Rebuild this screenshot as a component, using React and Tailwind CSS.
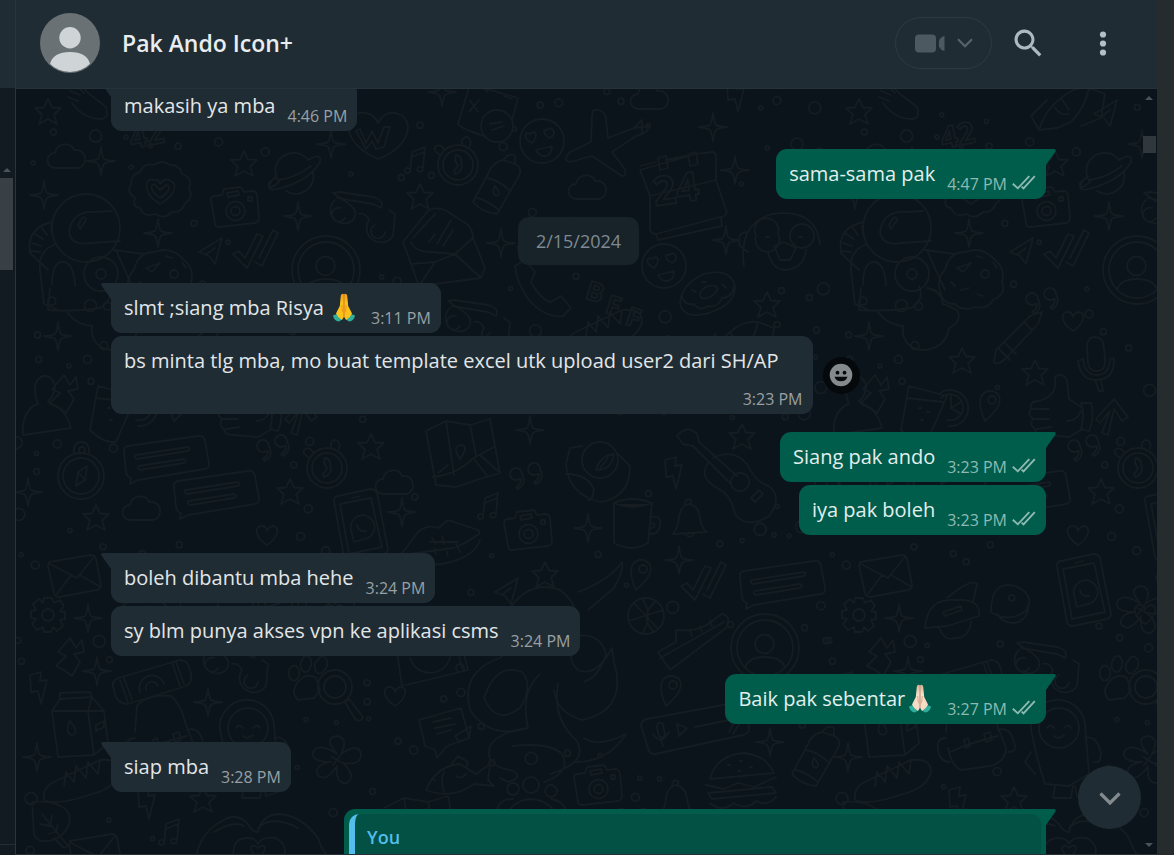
import React from "react";

const star = "M0-13L4-4.500L13-4L6 2.500L9 12L0 7L-9 12L-6 2.500L-13-4L-4-4.500Z";
const sparkle = "M0-14Q1.500-3 3-2Q5-.5 14 0Q4 1.500 3 3Q1.500 4.500 0 14Q-1.500 4.500-3 3Q-4 1.500-14 0Q-5-.5-3-2Q-1.500-3 0-14Z";
const heart = "M0 10C-15 0-11-10-5-9Q-1-9 0-4Q2-9 6-9C13-8 12 2 0 10Z";
const cloud = "M-12 11C-23 9-21-4-12-4C-10-15 5-15 7-7C20-9 22 9 11 11Z";
const check = "M-22 2L-16-1L-10 6L2-18L8-16L-8 16ZM4 6L18-22L23-19L7 14L0 10";
const bubbleNote = "M-42-6Q-43-11-38-12L32-22Q38-23 39-17L43 5Q44 10 39 11L-28 22L-36 26L-35 20Q-39 19-40 14ZM-30-3L22-11Q25-9 22-7L-29 1Q-33-1-30-3ZM-27 8L18 1Q22 3 18 5L-26 12Q-30 10-27 8Z";
const face = "M-22 0A22 22 0 1 0 22 0A22 22 0 1 0-22 0M-10 2C-20-3-17-10-12-7Q-7-11-6-6Q-6-2-10 2ZM8-3C1-6 0-13 5-11Q10-15 12-9Q12-5 8-3ZM-6 9L10 5Q10 14 3 15Q-4 15-6 9Z";
const clock = "M-20 0A20 20 0 1 0 20 0A20 20 0 1 0-20 0M-15 0A15 15 0 1 0 15 0A15 15 0 1 0-15 0M-2-10Q3-9 3-5L4 2Q2 8-3 9L-4 6L0 1L-3-5ZM-18-10Q-26-15-22-19Q-17-21-14-16M4-21Q3-28 9-28Q14-26 12-19";
const camera = "M-24-9Q-24-13-20-13L-13-14L-11-20L6-22L9-17L17-18Q21-18 22-14L24 9Q24 13 20 14L-16 18Q-20 18-20 14ZM-9 2A9.500 9.500 0 1 0 10 2A9.500 9.500 0 1 0-9 2M-4 2A4.500 4.500 0 1 0 5 2A4.500 4.500 0 1 0-4 2M-8-16L3-18L4-14L-7-12ZM13-12h4v4h-4Z";
const avatar = "M-34 0A34 34 0 1 0 34 0A34 34 0 1 0-34 0M-28 0A28 28 0 1 0 28 0A28 28 0 1 0-28 0M-10-4A9.500 9.500 0 1 0 9-4A9.500 9.500 0 1 0-10-4M-20 20Q-17 9 0 9Q17 9 20 20";
const notes = "M-7 9Q-12 6-12 11Q-11 15-7 12L-5-8L8-13L6 8Q1 5 0 9Q1 14 6 10M-5-3L7-8";
const bolt = "M-8-13L3-16L2-7L9-8L3 16L0 3L-7 4Z";
const quotes = "M-5-6A6 6 0 1 0-11 0L-6-1Q-6 5-11 7L-9 9Q0 4-5-6ZM13-11A6 6 0 1 0 7-5L12-6Q12 0 7 2L9 4Q18-1 13-11Z";
const pin = "M-6 16Q-14-2-9-10Q-2-18 7-11Q14-1-6 16ZM-3-5A4 4 0 1 0 5-5A4 4 0 1 0-3-5";
const glasses = "M-30-12A13 13 0 1 0-12 8Q-4-2-22-12L-32-19L-26-20L8-15Q20-12 16-4L8-8L-28-14M-6 2Q0 0 4 8M4 8A13 13 0 1 0 28 24L30 2L24-2M-24-4A7 7 0 1 0-20 6M10 13A7 7 0 1 0 20 20";
const envelope = "M-26-13L16-20Q20-20 21-16L26 10Q26 14 22 15L-16 22Q-20 22-21 18L-27-9ZM-25-11L2 3L19-18M-18 19L-4 0M24 11L5 0";
const gear = "M-4-17L4-17L6-12L12-15L16-9L12-4L17-3L17 4L12 5L15 11L9 16L5 12L3 17L-4 17L-5 12L-11 15L-16 9L-12 4L-17 3L-17-4L-12-5L-15-11L-9-16L-5-12ZM-6 0A6 6 0 1 0 6 0A6 6 0 1 0-6 0";
const person = "M-10-20A10 12 0 1 1 10-20Q8-10 3-7L7-3Q21 1 26 20L-22 27Q-24 8-12-2L-7-4Q-10-10-10-20Z";
const phone = "M-26-24Q-27-28-22-29L10-36Q15-36 17-32L28 24Q28 28 24 29L-10 36Q-15 36-16 32ZM-20-21L11-27L22 22L-11 29ZM-9 5A12 12 0 1 1 5 14L-6 17ZM-3 0Q-2 7 6 6M-8-27L0-29";
const planet = "M-16 8A18 18 0 0 1 13-14M18-3A18 18 0 0 1-9 17M-16 8Q-28 18-26 9L-18 2M13-14Q27-22 25-12Q15 6-14 14Q-30 19-24 8M-16 6Q0 4 16-8";
const helmet = "M-34 0A34 34 0 1 0 34 0A34 34 0 1 0-34 0M-17 4Q-14-17 8-16L26-17M-17 4Q-15 18 4 15L34 13M-8-3L-4-10Q0-12 0-8L-6 1ZM-34-6Q-60 0-56 25L-38 42M-30 16Q-48 22-46 42L-42 76L-28 82M-35-2L-34 6M-44 0L-39 7M-51 6L-43 11M-54 15L-45 18M-55 23L-46 24M28 22L58 26M30 22Q36 36 48 62M-34 57Q-34 33-22 34Q-12 36-11 58M-2 46A17 17 0 1 0 32 46A17 17 0 1 0-2 46M10 46A5 5 0 1 0 20 46A5 5 0 1 0 10 46M-36 60L-38 82Q-10 84 14 80Q28 72 22 58M-20 82Q-12 96 6 98Q4 118 24 122Q48 122 52 100Q66 94 60 82Q48 76 46 76Q44 62 30 60";
const cookie = "M-30 14Q-36 0-26-10Q-22-28-6-28Q10-34 22-22Q35-12 31 2Q36 14 22 20Q16 30 4 27Q-8 32-16 24Q-28 24-30 14M-14-12L0-17L-8-8ZM6-24L12-22M22-18L26-12M10-6A4 4 0 1 0 18-6A4 4 0 1 0 10-6M-10 10L-2 8M6 14L12 16M-20 2L-16 6";
const badge = "M-25 8Q-34 2-29-6Q-29-16-20-18Q-16-28-6-25Q2-31 10-25Q20-25 22-16Q33-12 29-2Q34 8 25 13Q22 23 12 22Q4 30-5 24Q-16 28-20 18Q-28 17-25 8ZM0 14C-20 2-14-14-6-10Q-1-11 0-6Q4-12 9-10C20-6 14 6 0 14ZM0 8C-12 0-9-8-5-5L0 0L6-5C12-5 9 3 0 8Z";
const whaleHeart = "M0 24C-42 6-32-26-12-22Q-3-20 0-12Q6-24 18-22C40-16 30 14 0 24ZM-18-6L-12 8L-6-4L0 8L6-8L12-8L6 12L-2 14L-6 6L-12 14L-22-4Z";
const calendar = "M-34-22L-18-26M-8-28L12-32M22-34L38-36Q42-36 42-32L42-8L52 22Q54 26 50 28L-18 46Q-24 46-24 40L-24 8L-34-18ZM-24 8L42-8M-18 46L-16 52L48 38L47 30M-16-30L-8-32L-6-20L-14-18ZM14-34L22-36L24-24L16-22Z";
const plane = "M-2-36Q-8-38-8-30L-9-4L-30 6Q-38 14-30 16L-8 10L22 30Q28 30 24 22L12 6L36-10Q50-14 48-20L34-18L8-8L6-26Q6-34-2-36ZM34-18L42-26L42-14";
const bottle = "M10-32Q16-40 22-36L22-28Q30-24 26-16L4 22Q-12 20-20 10L-4-20Q0-30 10-32ZM-6-14Q6-12 16-2M-16 6Q-6 8 6 18M2-6Q-2 2 4 4Q9 2 2-6ZM10-32L22-28";
const openEnvelope = "M-42 4L-18-26Q-12-32 0-28L22-14Q28-8 28 0L40 30L36 40L-26 48ZM-32 0L-10-24M-34 4Q-30 14-14 14L10 16L28 0M-34 26L-10 24L10 16L36 40M-16 4L-10-4M-8 6L6-18M-2 8L8-8M-10 24L-26 48";
const compass = "M-23 0A23 23 0 1 0 23 0A23 23 0 1 0-23 0M-18 0A18 18 0 1 0 18 0A18 18 0 1 0-18 0M-5 10L-3-4L6-10L4 4ZM-3-4L4 4M-7-23Q-8-34 0-34Q9-34 8-22M-2-26A3 3 0 1 0 4-26A3 3 0 1 0-2-26";
const pencil = "M-22 22L-20 10L14-24L26-28L22-16L-10 18Q-18 26-22 22ZM-12 2L0 14M-18 8L-6 20M8-18L16-10";
const mic = "M-8-16Q-8-26 0-26Q8-26 9-16L10-2Q10 8 2 8Q-6 8-7 0ZM-17-2Q-14 18 2 17Q20 16 19-5L15-4Q14 12 2 12Q-10 12-12-4ZM0 17L4 28L8 28L6 16";
const thumb = "M-24 4Q-26-4-16-4Q-2-8 0-18L0-28Q8-34 12-24L14-6L26 2M-24 4Q-28 10-22 14Q-26 20-20 24Q-20 30-10 30L14 32L28 24M-22 4L-6 4M-22 14L-6 14M-18 24L-4 22M26-2L36-2Q40 12 34 26L26 24Q30 10 26-2M12 16Q22 16 26 6";
const arrowUp = "M-14 4L4-16L18 2L12 6L4-6L-2 20L-8 18L0-4L-10 8Z";
const drink = "M-22-22L16-12L-4 34Q-16 36-30 22ZM-24-10L12-6M8-14A18 18 0 1 1 18 18M10-10A13 13 0 1 1 16 12M20 0L20-12M20 0L30-6M20 0L30 6M-12 0h2M-4 4h2M-10 12h2";
const map = "M-36-22L-16-32L8-28L28-34L38 20L18 26L-6 34L-26 32ZM-30 24Q-6 22 10 6L32-6M-24 20L-14 12M12 6L26 24M18 2L36 18M-16-32L-8 22M8-28L14 2M-2 6Q-10-6-2-8Q8-8-2 6Z";
const globe = "M-18 0A18 18 0 1 0 18 0A18 18 0 1 0-18 0M-18-14L-30-12L-34 4Q-32 34 0 42Q30 38 30 6L18-6M-34 14Q-12 14-6 30Q-8 42-12 40M-4 10Q0-4 14-6Q12 10-4 10M0 8L8-2";
const guitar = "M-44-40Q-34-52-24-42L-22-34L16 0M-44-40L-38-32L-28-30L10 8M12 0A9 9 0 1 0 26 12A9 9 0 1 0 12 0M-8-18Q12-28 26-12Q34 6 48 10Q62 22 48 40Q26 54 14 38Q10 18-4 12Q-24 0-12-14M30 22L38 14L42 18L34 26Z";
const mug = "M-18-22Q0-14 20-22L16 18Q0 28-18 18ZM-18-22Q0-30 20-22M18-8Q30-10 28 0Q26 12 16 8M18-2Q24-2 22 2L17 4M-12-20L14-20";
const bell = "M-14 14Q-8 6-8-4Q-6-14 2-16Q12-14 13-2Q14 8 20 12ZM-2-16Q-2-22 4-20L4-16M-2 14Q3 20 8 13";
const lips = "M-42 22L-24-2Q-14-10-4-6L6-14L36-4Q40 0 34 2Q16 16-4 16Q-22 18-42 22ZM-42 22Q-20 32 0 30Q32 24 38 6M-12 8L16 8M-8 14L-6 20M4 14L6 22M14 10L18 18M-10 4L-6 10M0 2L2 10";
const call = "M-30-26L-20-32L-10-20L-14-10Q-4 8 6 10L16 4L26 16L18 24Q0 26-16 8Q-28-8-30-26Z";
const donut = "M-28 6Q-26-12-4-22Q18-28 26-14Q30 0 16 10Q-4 22-20 18Q-28 14-28 6ZM-8-2Q-4-12 8-10Q12-4 0 2Q-8 4-8-2M-26 0Q-24 10-14 8Q-8 16 0 10Q10 12 14 2Q24 2 26-10M-16-6L-12-4M-6-14L-2-14M14-12L18-8";
const film = "M-38 2Q-42-6-34-10L28-28Q36-28 38-18Q42-6 34-2L-24 16Q-36 16-38 2ZM-28-10L-20 12M-32-8L-24 14M20-26L28-2M24-26L32-4M-12 4A10 10 0 0 1 12-4M-6 2A5 5 0 0 1 6-2";
const milk = "M-22-14L-14-26L18-28L30-14L34 18L20 30L-16 32ZM-22-14L14-14L30-14M14-14L20 30M-14-26L-14-32L16-33L18-28L14-14M-4-4Q-10 8-2 10Q6 8-4-4ZM22 0L30-4L30 2L22 6Z";
const backpack = "M-26 4L-24-22Q-14-34 10-32Q20-24 24-6L34 20Q34 34 18 38L-10 42Q-20 40-24 20M-22 24Q0 14 26 8M26 2Q38-2 42 14Q46 24 36 24M-26 10Q-36 10-34 22Q-32 34-22 34M-8 12L-4 10L-2 18L-6 20ZM12 6L18 4L20 12L14 14Z";
const penguin = "M-28 0A27 27 0 0 1 26-6L30 44L10 56L-14 54Q-22 30-28 0ZM-20-2A20 20 0 1 0 20-2A20 20 0 1 0-20-2M-12-2Q-9-7-5-2M5-2Q9-7 12-2M-5 6Q0 10 5 5M26 8Q38 4 42 24Q42 34 34 32M-28 22L-34 32L-24 44M-4 56L-6 68L12 68L14 56M16 56L18 66L30 62L28 46";
const paw = "M-12 6Q-4-4 6 2L10 14L4 22L-12 24Q-20 16-12 6ZM-20-8A5 7 0 1 0-12 2A5 7 0 1 0-20-8M-8-16A5 7 0 1 0 0-8A5 7 0 1 0-8-16M8-16A5 7 0 1 0 14-6A5 7 0 1 0 8-16";
const magnifier = "M-17 0A17 17 0 1 0 17 0A17 17 0 1 0-17 0M-11 0A11 11 0 1 0 11 0A11 11 0 1 0-11 0M10 15L14 12L28 30Q26 36 20 32Z";
const flower = "M0-6Q-14-22 0-24Q12-22 4-6Q22-18 24-6Q24 6 6 3Q20 16 10 23Q-2 24 0 6Q-12 24-20 14Q-22 4-6 2Q-26 2-24-8Q-18-18 0-6ZM0 0L3-4M0 0L5 3M0 0L-4 5M0 0L-5-3";
const bread = "M-34 20Q-36 6-20 0L22-20Q42-22 42-8Q38 8 14 14Q-20 26-34 20ZM-14 6L-12-8L-4 2L-2-14L8-2L10-18L20-6L22-20";
const leaf = "M-18-24Q8-26 18-14Q24 0 8 12Q-12 20-16 8ZM-8-12L18 20L14 22L4 12M-10-2L0 0L2-10M-2 8L6 6L8-2";
const handsHeart = "M-62 20Q-56-6-34-16Q-22-24-10-12Q-6-4 0-4Q4-22 22-22Q44-20 60 2Q66 20 72 20M-24 24Q-28 2-10 2Q-2 2 0 8Q4 0 18 2Q32 10 24 24M-44-4Q-24-16-14-10M0-8Q14-22 40-8M0 22C-12 12-6 6 0 12C6 6 12 12 0 22";
const octopus = "M-50-38Q-28-74 4-62Q26-46 20-16Q8 4 22 18Q40 26 56-4L58 10Q72 58 26 68Q0 60-2 38M-50-38Q-34-8-56 6Q-96 20-86 58Q-66 88-28 76M-28 76Q-36 40-16 22M20-16Q44-20 50 2Q44 24 28 30M-72 46Q-60 10-34 20Q-22 34-36 56Q-60 74-72 46M2 32Q-4 66 20 88Q34 110-6 122M-28 76Q-58 80-66 94Q-72 114-46 118Q-30 124-48 130L-56 126M-44 94Q-6 90 6 102Q16 120-12 130M20 110Q52 110 70 82Q42 96 28 86M22-60Q54-72 66-90Q68-82 58-64L32-42";
const ball = "M-18 0A18 18 0 1 0 18 0A18 18 0 1 0-18 0M-12-13L12 13M-17 5L17-6M-4-18Q8 0-4 18M10-15Q-8 0 8 16";
const shoe = "M-38 12L-20 2L-20-10Q0-8 12-16L26-26Q36-24 30-12L-26 30ZM-36 18L28-18M-6-10L-4-4M4-14L6-8M14-20L16-14";
const chat = "M-24-12L18-24L26 6L4 14L-6 26L-8 18L-18 14ZM-10-10L8-14M-8-4L12-8M-6 2L8-2M12 4L28-6L26 6L16 10Z";
const fish = "M-30 18Q-20-6 4-8L20 2L34-8L32 8L38 14L18 12Q-4 28-30 18ZM-6-6L2-16L12-10L10-4M-12 0Q-16 8-12 20M-22 8h1M0 4Q6 8 10 2";
const people = "M-8-18A8 8 0 1 0 8-18A8 8 0 1 0-8-18M-24-14A6 6 0 1 0-12-14A6 6 0 1 0-24-14M14-12A6 6 0 1 0 26-12A6 6 0 1 0 14-12M-24 16Q-22-2 0-4Q22-2 26 16M-34 10Q-34-4-18-4M36 12Q34-2 20-4";
const voice = "M-54-6Q-54-12-48-13L44-30Q50-30 52-24L54-4Q54 2 48 3L-40 22Q-46 22-47 16ZM-38-4Q-38-12-32-8L-30 2Q-32 8-36 4ZM-42 2Q-34 14-26 0M-34 8L-32 14M-18-8L-8-4L-16 4ZM0-5L44-14M34 0L40-12M38 2L44-8";
const burger = "M-32-6Q-26-30 2-32Q24-30 32-12ZM-36 0L-18 4L-4-2L12 2L34-8M-34 8L30 2L34 8L-30 14ZM-32 18Q-20 28-8 18Q4 26 14 16Q26 22 34 12M-14-20h2M-2-24h2M8-18h2M-4-14h2";
const laptop = "M-36-24L26-34L38 14L-28 30ZM-20 2A20 20 0 1 0 20-10M28-4L32 12M26 12A4 4 0 1 0 34 12A4 4 0 1 0 26 12";
const tri = "M-12 2L11-12L4 14L-2 6ZM-4 4L4-2";
const rocket = "M-22 24Q-16 4 0-8Q14-20 28-18Q24 2 10 16L-4 22ZM-22 24L-30 10L-14-6M0-8L8 4M-6 2Q0 10 8 8M28-18L44-12L40 12L20 20";
const hotdog = "M-20-20Q-10-22 0-10L18 4Q22 16 12 16Q-4 16-16 0M-18-12L-8-8M-20-6L-10-2M-12-18L-4-10";
const sheet = "M-24 18L-12-22L36-8L30 14M-24 18Q-22 22 2 30M-12-6L-4 6M-3-6L-13 6M-2-20L6-14M22-10L30-7M-1 20A16 16 0 1 0 31 20A16 16 0 1 0-1 20M8 18L20 16M10 24L22 20";
const chick = "M-38 34Q-44-8-10-18Q34-24 38 12M-34 0Q-46 0-42 14L-34 20M-26 4A12 12 0 1 0-4 2A12 12 0 1 0-26 4M8 4A12 12 0 1 0 32 4A12 12 0 1 0 8 4M-8 14L2 10L14 16L8 28L-2 28ZM-14 20Q-10 38 4 38Q22 36 24 18M-16 5h3M17 5h3";
const ufo = "M-40 16Q-38-14-10-12Q16-14 14 4L-18 14ZM-18-14Q6-34 12-28L8-10M26 0Q26-32 50-26Q70-18 62-2Q44 12 26 0ZM-26 16Q-20 30-10 26Q4 26 6 10M32 2Q40 14 54 10Q66 2 62-6M-22 0L-4-6L-3-2L-20 4Z";
const hash = "M-16 8L-6-2L-14-6L-2-20L4-10L10-18L12-6L2-4L8 4L0 18L-8 12Z";

const doodles = [
  [hotdog, 88, 103, 26], [star, 48, 112, 15], [cloud, 67, 157, 20], [sparkle, 101, 161, 16], [badge, 160, 190, 34], [star, 244, 164, 15],
  [planet, 295, 174, 28], [camera, 235, 209, 28], [sparkle, 44, 195, 14], [sparkle, 158, 233, 12], [sparkle, 298, 216, 15], [sparkle, 331, 144, 12],
  [helmet, 86, 228, 70], [whaleHeart, 378, 135, 30], [glasses, 365, 212, 34], [tri, 211, 250, 16], [check, 255, 252, 26], [avatar, 326, 270, 38],
  [cookie, 160, 280, 36], [sheet, 482, 106, 36], [face, 542, 141, 26], [plane, 600, 146, 42], [cloud, 650, 98, 20], [clock, 458, 165, 25],
  [notes, 417, 160, 14], [bottle, 493, 192, 34], [cloud, 588, 188, 20], [calendar, 674, 188, 52], [star, 420, 197, 15], [openEnvelope, 445, 238, 50],
  [sparkle, 501, 243, 13], [sparkle, 713, 127, 15], [sparkle, 735, 170, 13], [sparkle, 726, 240, 14], [face, 664, 266, 25], [bolt, 735, 96, 16],
  [chick, 782, 232, 42], [sparkle, 442, 92, 12], [rocket, 250, 106, 38], [tri, 295, 112, 20], [sparkle, 58, 336, 15], [person, 45, 408, 32],
  [hash, 66, 395, 16], [drink, 120, 408, 34], [compass, 81, 476, 30], [bubbleNote, 166, 458, 44], [bubbleNote, 216, 493, 44], [quotes, 274, 452, 18],
  [clock, 327, 468, 26], [star, 371, 447, 14], [star, 290, 492, 15], [star, 96, 518, 13], [cloud, 142, 509, 22], [heart, 267, 535, 13],
  [phone, 360, 525, 38], [sparkle, 28, 492, 13], [envelope, 75, 575, 34], [pencil, 205, 340, 34], [mic, 284, 363, 28], [thumb, 244, 405, 38],
  [arrowUp, 299, 415, 22], [heart, 262, 321, 13], [quotes, 232, 305, 18], [star, 151, 361, 14], [star, 224, 373, 14], [pin, 180, 405, 14],
  [map, 462, 453, 44], [sparkle, 530, 430, 12], [globe, 600, 460, 40], [quotes, 527, 480, 18], [notes, 490, 506, 14], [camera, 528, 532, 28],
  [sparkle, 588, 528, 13], [mug, 632, 525, 28], [bell, 687, 520, 22], [guitar, 721, 476, 56], [star, 742, 437, 17], [bolt, 673, 473, 15],
  [lips, 442, 534, 40], [cloud, 395, 483, 20], [sparkle, 402, 512, 12], [call, 545, 292, 30], [donut, 708, 296, 30], [star, 767, 305, 15],
  [sparkle, 679, 560, 12], [gear, 48, 615, 20], [sparkle, 88, 618, 15], [hash, 72, 658, 20], [bolt, 38, 688, 16], [sparkle, 97, 671, 12],
  [milk, 74, 725, 36], [film, 152, 688, 40], [backpack, 161, 728, 44], [penguin, 248, 730, 48], [glasses, 238, 662, 34], [paw, 310, 676, 24],
  [magnifier, 335, 687, 28], [flower, 337, 760, 27], [sparkle, 208, 702, 13], [sparkle, 37, 757, 13], [bread, 78, 780, 38], [leaf, 50, 826, 27],
  [bolt, 146, 803, 16], [star, 203, 800, 14], [handsHeart, 258, 836, 58], [notes, 171, 832, 14], [envelope, 96, 854, 30], [tri, 507, 590, 20],
  [star, 545, 575, 13], [octopus, 556, 652, 90], [ball, 646, 616, 20], [shoe, 696, 640, 34], [pin, 672, 690, 16], [pin, 642, 574, 14],
  [check, 703, 584, 26], [bubbleNote, 782, 583, 40], [avatar, 765, 648, 38], [chat, 443, 732, 28], [fish, 456, 772, 34], [people, 531, 803, 32],
  [camera, 598, 787, 28], [voice, 695, 732, 52], [burger, 742, 785, 38], [bell, 674, 801, 22], [sparkle, 770, 742, 14], [laptop, 430, 656, 40],
  [heart, 395, 696, 13], [bottle, 812, 764, 34], [ufo, 154, 612, 44], [phone, 272, 590, 36], [heart, 334, 614, 16], [flower, 330, 610, 26],
  [map, 420, 830, 34], [bread, 600, 330, 30], [rocket, 730, 340, 34], [glasses, 480, 320, 30],
];

const letters = [["42", 132, 149, 30, -12], ["24", 655, 206, 40, -8], ["B", 584, 298, 26, 18], ["F", 604, 312, 26, 18], ["F", 624, 324, 26, 18]];

const TILE = 811;

function makeDots() {
  const out = [];
  let s = 41;
  const rnd = () => (s = (s * 16807) % 2147483647) / 2147483647;
  for (let i = 0; i < 2600 && out.length < 300; i++) {
    const x = 16 + rnd() * TILE;
    const y = 89 + rnd() * 900;
    const r = [2, 3, 3, 4, 6][Math.floor(rnd() * 5)];
    const hitsDoodle = doodles.some(([, dx, dy, dr]) => Math.hypot(dx - x, dy - y) < dr + r);
    const hitsDot = out.some((d) => Math.hypot(d[0] - x, d[1] - y) < 15);
    if (!hitsDoodle && !hitsDot) out.push([x, y, r]);
  }
  return out;
}

const dots = makeDots();

function Wallpaper() {
  return (
    <svg aria-hidden="true" className="pointer-events-none absolute inset-0 h-full w-full" fill="none" stroke="#151d23" strokeWidth="1.8" strokeLinejoin="round" strokeLinecap="round">
      <defs>
        <g id="doodles">
          {doodles.map(([d, x, y], i) => <path key={i} d={d} transform={`translate(${x} ${y})`} />)}
          {letters.map(([t, x, y, size, a], i) => (
            <text key={i} transform={`translate(${x} ${y}) rotate(${a})`} fontSize={size} fontWeight="700" fontFamily="Open Sans, sans-serif">{t}</text>
          ))}
          {dots.map(([x, y, r], i) => <circle key={i} cx={x} cy={y} r={r} />)}
        </g>
      </defs>
      <use href="#doodles" x="-16" y="-89" />
      <use href="#doodles" x={TILE - 16} y="-89" />
    </svg>
  );
}

function Hands({ light }) {
  const skin = light ? "#f6dcc6" : "#fcc21b";
  const shade = light ? "#dcae94" : "#f29a1c";
  const id = light ? "hands-light" : "hands-gold";
  return (
    <svg role="img" aria-label="folded hands" viewBox="0 1 24 30" className="h-[30px] w-[30px] shrink-0">
      <defs>
        <linearGradient id={id} x1="0" x2="0" y1="0" y2="1">
          <stop offset="0" stopColor={shade} />
          <stop offset=".35" stopColor={skin} />
          <stop offset="1" stopColor={skin} />
        </linearGradient>
      </defs>
      <path d="M1 23.500L5 22L10 27.500L7 29.500Q2 29 1 23.500Z" fill="#2fae9b" />
      <path d="M23 23.500L19 22L14 27.500L17 29.500Q22 29 23 23.500Z" fill="#2fae9b" />
      <path d="M11.800 2Q9.500 1 8.800 3.500L7.800 14L4 21.500Q6 26 10 28L11.800 25Z" fill={`url(#${id})`} />
      <path d="M12.200 2Q14.500 1 15.200 3.500L16.200 14L20 21.500Q18 26 14 28L12.200 25Z" fill={`url(#${id})`} />
      <path d="M12 3V25M9.800 13Q9.500 18 11.500 21M14.200 13Q14.500 18 12.500 21" stroke={shade} strokeWidth="1.100" fill="none" />
    </svg>
  );
}

function Ticks() {
  return (
    <svg role="img" aria-label="Delivered" viewBox="0 0 24 15" className="mb-[5px] ml-[5px] h-[15px] w-6 shrink-0" fill="none" stroke="currentColor" strokeWidth="1.900">
      <path d="M.8 8.800L5.800 13.300L17.300 1.200" />
      <path d="M9.600 11.600L11.500 13.300L22.800 1.200" />
    </svg>
  );
}

function Tail({ out }) {
  return out ? (
    <svg aria-hidden="true" viewBox="0 0 11 17" className="absolute top-0 -right-[10px] h-[17px] w-[11px]">
      <path d="M0 0H9.500Q11.500 .8 10.500 2.500L1 16V17H0Z" fill="#005c4b" />
    </svg>
  ) : (
    <svg aria-hidden="true" viewBox="0 0 11 17" className="absolute top-0 -left-[10px] h-[17px] w-[11px]">
      <path d="M11 0H1.500Q-.5 .8 .5 2.500L10 16V17H11Z" fill="#202c33" />
    </svg>
  );
}

function Message({ text, time, out, tail, hands, wide, reaction, follows }) {
  return (
    <div className={`flex items-center gap-[10px] ${out ? "justify-end" : "justify-start"} ${follows ? "mt-[3px]" : "mt-[18px]"}`}>
      <div
        className={`relative flex rounded-[11px] pl-[13px] pr-[10px] ${out ? "bg-[#005c4b] text-[#e2efed]" : "bg-[#202c33] text-[#e2e6e8]"} ${
          tail ? (out ? "rounded-tr-none" : "rounded-tl-none") : ""
        } ${wide ? "h-[78px] flex-col" : "h-[50px] gap-3"}`}
      >
        {tail && <Tail out={out} />}
        <p className={`flex items-start pt-[10px] text-[20px] leading-[30px] whitespace-nowrap ${wide ? "pr-6" : ""}`}>
          <span className="whitespace-pre">{text}</span>
          {hands && <Hands light={hands === "light"} />}
        </p>
        <div className={`mt-auto flex items-end self-end pb-[4px] ${out ? "text-[#8fbab2]" : "text-[#98a0a4]"}`}>
          <time className="text-[16px] leading-[22px] whitespace-nowrap">{time}</time>
          {out && <Ticks />}
        </div>
      </div>
      {reaction && (
        <button type="button" aria-label="React" className="flex h-[37px] w-[37px] items-center justify-center rounded-full bg-[#05090c]">
          <svg viewBox="0 0 24 24" className="h-6 w-6">
            <circle cx="12" cy="12" r="11.300" fill="#858a8d" />
            <circle cx="8.500" cy="9.700" r="1.900" fill="#05090c" />
            <circle cx="15.500" cy="9.700" r="1.900" fill="#05090c" />
            <path d="M5.500 13.800H18.500Q17 18.300 12 18.300Q7 18.300 5.500 13.800Z" fill="#05090c" />
          </svg>
        </button>
      )}
    </div>
  );
}

function Header() {
  return (
    <header className="flex h-[89px] shrink-0 items-center border-b border-[#263239] bg-[#202c33] pr-6 pb-[2px] pl-6">
      <svg role="img" aria-label="Profile picture" viewBox="0 0 60 60" className="h-[60px] w-[60px] shrink-0">
        <defs><clipPath id="profile"><circle cx="30" cy="30" r="29" /></clipPath></defs>
        <circle cx="30" cy="30" r="30" fill="#6a7175" />
        <g fill="#cfd4d7" clipPath="url(#profile)">
          <circle cx="30" cy="24.700" r="10.700" />
          <path d="M10 51Q13 39 30 39Q47 39 50 51Q42 59 30 59Q18 59 10 51Z" />
        </g>
      </svg>
      <h1 className="ml-[22px] flex-1 text-[23px] leading-8 font-semibold text-[#e9edef]">Pak Ando Icon+</h1>
      <button type="button" aria-label="Video call" className="flex h-[52px] w-[97px] items-center justify-center gap-3 rounded-full border border-[#2e3a41]">
        <svg viewBox="0 0 31 20" className="h-5 w-[31px]" fill="#4b5961">
          <rect x="1" y="1.500" width="21" height="18" rx="4" />
          <path d="M30.500 3V18Q27 17.500 25 13.500V7.500Q27 3.500 30.500 3Z" />
        </svg>
        <svg viewBox="0 0 16 10" className="h-[10px] w-4" fill="none" stroke="#55636b" strokeWidth="2.200"><path d="M1 1.200L8 8.200L15 1.200" /></svg>
      </button>
      <button type="button" aria-label="Search" className="ml-[6px] flex h-[60px] w-[60px] items-center justify-center text-[#aebac1]">
        <svg viewBox="0 0 24 24" className="h-9 w-9" fill="currentColor">
          <path d="M15.9,14.3H15L14.700,14c1-1.100,1.600-2.700,1.600-4.300c0-3.700-3-6.700-6.700-6.700S3,6,3,9.700s3,6.700,6.700,6.700c1.600,0,3.200-0.600,4.300-1.600l0.300,0.300v0.800l5.100,5.100l1.500-1.500L15.900,14.300z M9.700,14.300c-2.600,0-4.600-2.100-4.600-4.600s2.100-4.600,4.600-4.600s4.600,2.100,4.600,4.600S12.300,14.300,9.700,14.300z" />
        </svg>
      </button>
      <button type="button" aria-label="Menu" className="ml-[15px] flex h-[60px] w-[60px] items-center justify-center text-[#b4c0c6]">
        <svg viewBox="0 0 8 26" className="h-[26px] w-2" fill="currentColor">
          <circle cx="4" cy="4.500" r="3.100" /><circle cx="4" cy="13.500" r="3.100" /><circle cx="4" cy="22.500" r="3.100" />
        </svg>
      </button>
    </header>
  );
}

const Arrow = ({ down }) => (
  <svg aria-hidden="true" viewBox="0 0 8 4" className="h-1 w-2 shrink-0" fill="#4a5358">
    <path d={down ? "M0 0H8L4 4Z" : "M0 4H8L4 0Z"} />
  </svg>
);

export default function App() {
  return (
    <div className="flex h-screen overflow-hidden bg-[#0b141a] font-['Open_Sans','Noto_Sans',sans-serif]">
      <aside className="flex w-4 shrink-0 flex-col border-r border-[#2a343a] bg-[#111b21]">
        <div className="h-[88px] shrink-0 bg-[#202c33]" />
        <div className="flex flex-1 flex-col items-start border-b border-[#222d34] pt-20">
          <div className="flex w-[13px] justify-center"><Arrow /></div>
          <div className="mt-[6px] h-[92px] w-[13px] bg-[#384045]" />
        </div>
        <div className="h-[10px] shrink-0" />
      </aside>

      <main className="flex min-w-0 flex-1 flex-col">
        <Header />
        <section aria-label="Messages" className="relative flex min-h-0 flex-1 overflow-hidden border-b border-[#263038]">
          <Wallpaper />
          <div className="relative -mt-[26px] min-w-0 flex-1 px-[95px]">
            <Message text="makasih ya mba" time="4:46 PM" tail />
            <Message text="sama-sama pak" time="4:47 PM" out tail />
            <div className="mt-[18px] flex justify-center">
              <span className="rounded-[11px] bg-[#182229] px-[18px] py-[10px] text-[18px] leading-7 text-[#7e8a92]">2/15/2024</span>
            </div>
            <Message text="slmt ;siang mba Risya " time="3:11 PM" tail hands="gold" />
            <Message text="bs minta tlg mba, mo buat template excel utk upload user2 dari SH/AP" time="3:23 PM" wide reaction follows />
            <Message text="Siang pak ando" time="3:23 PM" out tail />
            <Message text="iya pak boleh" time="3:23 PM" out follows />
            <Message text="boleh dibantu mba hehe" time="3:24 PM" tail />
            <Message text="sy blm punya akses vpn ke aplikasi csms" time="3:24 PM" follows />
            <Message text="Baik pak sebentar" time="3:27 PM" out tail hands="light" />
            <Message text="siap mba" time="3:28 PM" tail />
            <div className="mt-[17px] flex justify-end">
              <div className="relative w-[702px] rounded-[11px] rounded-tr-none bg-[#005c4b] p-[5px]">
                <Tail out />
                <div className="h-24 overflow-hidden rounded-[10px] border-l-[6px] border-[#53bdeb] bg-[#025144] px-3 pt-[9px]">
                  <span className="text-[18px] leading-7 font-semibold text-[#53bdeb]">You</span>
                </div>
              </div>
            </div>
          </div>
          <div className="relative flex w-4 shrink-0 flex-col items-center pt-[7px] pb-[7px]">
            <Arrow />
            <div className="mt-9 h-[17px] w-[13px] bg-[#30383d]" />
            <div className="flex-1" />
            <Arrow down />
          </div>
          <button type="button" aria-label="Scroll to bottom" className="absolute right-4 bottom-[25px] flex h-[63px] w-[63px] items-center justify-center rounded-full bg-[#202c33]">
            <svg viewBox="0 0 22 14" className="mt-[3px] h-[14px] w-[22px]" fill="none" stroke="#838b8f" strokeWidth="3.200"><path d="M1.500 1.500L11 11L20.500 1.500" /></svg>
          </button>
        </section>
      </main>
      <div className="w-[17px] shrink-0 bg-[#262b2e]" />
    </div>
  );
}
